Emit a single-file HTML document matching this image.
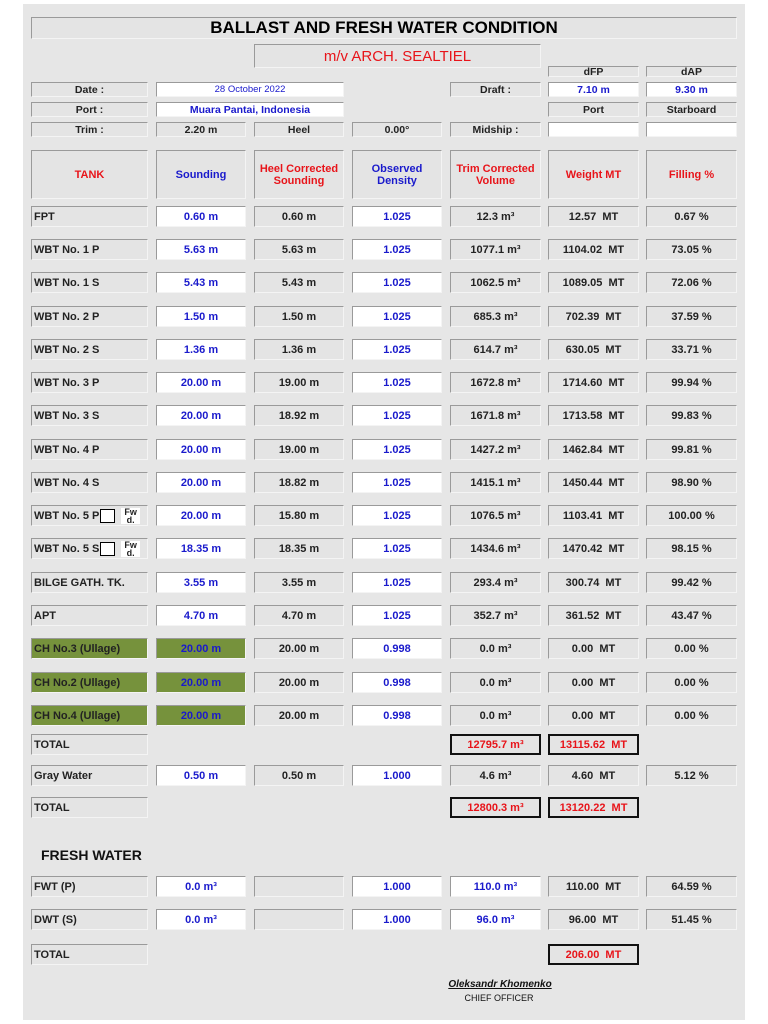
<!DOCTYPE html>
<html><head><meta charset="utf-8"><style>
body{margin:0;width:768px;height:1024px;background:#fff;position:relative;overflow:hidden;font-family:"Liberation Sans",Arial,sans-serif;font-weight:bold;font-size:11px;color:#222}
#p{position:absolute;left:23px;top:4px;width:722px;height:1016px;background:#e6e6e6}
.c{position:absolute;box-sizing:border-box;background:#e4e4e4;border-top:1px solid #9a9a9a;border-left:1px solid #9a9a9a;border-bottom:1px solid #f4f4f4;border-right:1px solid #f4f4f4;display:flex;align-items:center;justify-content:center;text-align:center;height:21px;white-space:nowrap}
.w{background:#fff}
.b{color:#1a1acc}
.r{color:#e8141a}
.g{background:#76923c}
.l{justify-content:flex-start;padding-left:2px}
.t{border:2px solid #111;color:#e8141a}
.c1{left:31px;width:117px}.c2{left:156px;width:90px}.c3{left:254px;width:90px}.c4{left:352px;width:90px}.c5{left:450px;width:91px}.c6{left:548px;width:91px}.c7{left:646px;width:91px}
.h{top:150px;height:49px;line-height:12px}
.s{height:15px;font-size:10.5px}
</style></head><body>
<div id="p"></div>
<div class="c" style="left:31px;width:706px;top:17px;height:22px;font-size:17px;color:#000">BALLAST AND FRESH WATER CONDITION</div>
<div class="c r" style="left:254px;width:287px;top:44px;height:24px;font-size:15px;font-weight:normal">m/v ARCH. SEALTIEL</div>
<div class="c s c6" style="top:66px;height:11px">dFP</div><div class="c s c7" style="top:66px;height:11px">dAP</div>
<div class="c s c1" style="top:82px">Date :</div>
<div class="c s w b c2" style="top:82px;width:188px;font-weight:normal;font-size:9.5px">28 October 2022</div>
<div class="c s c5" style="top:82px">Draft :</div>
<div class="c s w b c6" style="top:82px">7.10 m</div><div class="c s w b c7" style="top:82px">9.30 m</div>
<div class="c s c1" style="top:102px">Port :</div>
<div class="c s w b c2" style="top:102px;width:188px">Muara Pantai, Indonesia</div>
<div class="c s c6" style="top:102px">Port</div><div class="c s c7" style="top:102px">Starboard</div>
<div class="c s c1" style="top:122px">Trim :</div><div class="c s c2" style="top:122px">2.20 m</div><div class="c s c3" style="top:122px">Heel</div><div class="c s c4" style="top:122px">0.00°</div><div class="c s c5" style="top:122px">Midship :</div><div class="c s w c6" style="top:122px"></div><div class="c s w c7" style="top:122px"></div>
<div class="c h r c1">TANK</div><div class="c h b c2">Sounding</div><div class="c h r c3">Heel Corrected<br>Sounding</div><div class="c h b c4">Observed<br>Density</div><div class="c h r c5">Trim Corrected<br>Volume</div><div class="c h r c6">Weight MT</div><div class="c h r c7">Filling %</div>

<div style="position:absolute;top:206px;left:0;width:768px">
<div class="c l c1" style="top:0">FPT</div><div class="c w b c2" style="top:0">0.60 m</div><div class="c c3" style="top:0">0.60 m</div><div class="c w b c4" style="top:0">1.025</div><div class="c c5" style="top:0">12.3 m³</div><div class="c c6" style="top:0">12.57&nbsp; MT</div><div class="c c7" style="top:0">0.67 %</div>
<div class="c l c1" style="top:33px">WBT No. 1 P</div><div class="c w b c2" style="top:33px">5.63 m</div><div class="c c3" style="top:33px">5.63 m</div><div class="c w b c4" style="top:33px">1.025</div><div class="c c5" style="top:33px">1077.1 m³</div><div class="c c6" style="top:33px">1104.02&nbsp; MT</div><div class="c c7" style="top:33px">73.05 %</div>
<div class="c l c1" style="top:66px">WBT No. 1 S</div><div class="c w b c2" style="top:66px">5.43 m</div><div class="c c3" style="top:66px">5.43 m</div><div class="c w b c4" style="top:66px">1.025</div><div class="c c5" style="top:66px">1062.5 m³</div><div class="c c6" style="top:66px">1089.05&nbsp; MT</div><div class="c c7" style="top:66px">72.06 %</div>
<div class="c l c1" style="top:100px">WBT No. 2 P</div><div class="c w b c2" style="top:100px">1.50 m</div><div class="c c3" style="top:100px">1.50 m</div><div class="c w b c4" style="top:100px">1.025</div><div class="c c5" style="top:100px">685.3 m³</div><div class="c c6" style="top:100px">702.39&nbsp; MT</div><div class="c c7" style="top:100px">37.59 %</div>
<div class="c l c1" style="top:133px">WBT No. 2 S</div><div class="c w b c2" style="top:133px">1.36 m</div><div class="c c3" style="top:133px">1.36 m</div><div class="c w b c4" style="top:133px">1.025</div><div class="c c5" style="top:133px">614.7 m³</div><div class="c c6" style="top:133px">630.05&nbsp; MT</div><div class="c c7" style="top:133px">33.71 %</div>
<div class="c l c1" style="top:166px">WBT No. 3 P</div><div class="c w b c2" style="top:166px">20.00 m</div><div class="c c3" style="top:166px">19.00 m</div><div class="c w b c4" style="top:166px">1.025</div><div class="c c5" style="top:166px">1672.8 m³</div><div class="c c6" style="top:166px">1714.60&nbsp; MT</div><div class="c c7" style="top:166px">99.94 %</div>
<div class="c l c1" style="top:199px">WBT No. 3 S</div><div class="c w b c2" style="top:199px">20.00 m</div><div class="c c3" style="top:199px">18.92 m</div><div class="c w b c4" style="top:199px">1.025</div><div class="c c5" style="top:199px">1671.8 m³</div><div class="c c6" style="top:199px">1713.58&nbsp; MT</div><div class="c c7" style="top:199px">99.83 %</div>
<div class="c l c1" style="top:233px">WBT No. 4 P</div><div class="c w b c2" style="top:233px">20.00 m</div><div class="c c3" style="top:233px">19.00 m</div><div class="c w b c4" style="top:233px">1.025</div><div class="c c5" style="top:233px">1427.2 m³</div><div class="c c6" style="top:233px">1462.84&nbsp; MT</div><div class="c c7" style="top:233px">99.81 %</div>
<div class="c l c1" style="top:266px">WBT No. 4 S</div><div class="c w b c2" style="top:266px">20.00 m</div><div class="c c3" style="top:266px">18.82 m</div><div class="c w b c4" style="top:266px">1.025</div><div class="c c5" style="top:266px">1415.1 m³</div><div class="c c6" style="top:266px">1450.44&nbsp; MT</div><div class="c c7" style="top:266px">98.90 %</div>
<div class="c l c1" style="top:299px">WBT No. 5 P<span style="display:inline-block;width:13px;height:12px;border:1.5px solid #000;background:#fff;margin-left:1px"></span><span style="font-size:9px;line-height:8px;margin-left:6px;background:#fff;padding:0 3px">Fw<br>d.</span></div><div class="c w b c2" style="top:299px">20.00 m</div><div class="c c3" style="top:299px">15.80 m</div><div class="c w b c4" style="top:299px">1.025</div><div class="c c5" style="top:299px">1076.5 m³</div><div class="c c6" style="top:299px">1103.41&nbsp; MT</div><div class="c c7" style="top:299px">100.00 %</div>
<div class="c l c1" style="top:332px">WBT No. 5 S<span style="display:inline-block;width:13px;height:12px;border:1.5px solid #000;background:#fff;margin-left:1px"></span><span style="font-size:9px;line-height:8px;margin-left:6px;background:#fff;padding:0 3px">Fw<br>d.</span></div><div class="c w b c2" style="top:332px">18.35 m</div><div class="c c3" style="top:332px">18.35 m</div><div class="c w b c4" style="top:332px">1.025</div><div class="c c5" style="top:332px">1434.6 m³</div><div class="c c6" style="top:332px">1470.42&nbsp; MT</div><div class="c c7" style="top:332px">98.15 %</div>
<div class="c l c1" style="top:366px">BILGE GATH. TK.</div><div class="c w b c2" style="top:366px">3.55 m</div><div class="c c3" style="top:366px">3.55 m</div><div class="c w b c4" style="top:366px">1.025</div><div class="c c5" style="top:366px">293.4 m³</div><div class="c c6" style="top:366px">300.74&nbsp; MT</div><div class="c c7" style="top:366px">99.42 %</div>
<div class="c l c1" style="top:399px">APT</div><div class="c w b c2" style="top:399px">4.70 m</div><div class="c c3" style="top:399px">4.70 m</div><div class="c w b c4" style="top:399px">1.025</div><div class="c c5" style="top:399px">352.7 m³</div><div class="c c6" style="top:399px">361.52&nbsp; MT</div><div class="c c7" style="top:399px">43.47 %</div>
<div class="c l g c1" style="top:432px">CH No.3 (Ullage)</div><div class="c g b c2" style="top:432px">20.00 m</div><div class="c c3" style="top:432px">20.00 m</div><div class="c w b c4" style="top:432px">0.998</div><div class="c c5" style="top:432px">0.0 m³</div><div class="c c6" style="top:432px">0.00&nbsp; MT</div><div class="c c7" style="top:432px">0.00 %</div>
<div class="c l g c1" style="top:466px">CH No.2 (Ullage)</div><div class="c g b c2" style="top:466px">20.00 m</div><div class="c c3" style="top:466px">20.00 m</div><div class="c w b c4" style="top:466px">0.998</div><div class="c c5" style="top:466px">0.0 m³</div><div class="c c6" style="top:466px">0.00&nbsp; MT</div><div class="c c7" style="top:466px">0.00 %</div>
<div class="c l g c1" style="top:499px">CH No.4 (Ullage)</div><div class="c g b c2" style="top:499px">20.00 m</div><div class="c c3" style="top:499px">20.00 m</div><div class="c w b c4" style="top:499px">0.998</div><div class="c c5" style="top:499px">0.0 m³</div><div class="c c6" style="top:499px">0.00&nbsp; MT</div><div class="c c7" style="top:499px">0.00 %</div>
<div class="c l c1" style="top:528px">TOTAL</div><div class="c t c5" style="top:528px">12795.7 m³</div><div class="c t c6" style="top:528px">13115.62&nbsp; MT</div>
<div class="c l c1" style="top:559px">Gray Water</div><div class="c w b c2" style="top:559px">0.50 m</div><div class="c c3" style="top:559px">0.50 m</div><div class="c w b c4" style="top:559px">1.000</div><div class="c c5" style="top:559px">4.6 m³</div><div class="c c6" style="top:559px">4.60&nbsp; MT</div><div class="c c7" style="top:559px">5.12 %</div>
<div class="c l c1" style="top:591px">TOTAL</div><div class="c t c5" style="top:591px">12800.3 m³</div><div class="c t c6" style="top:591px">13120.22&nbsp; MT</div>
<div style="position:absolute;left:41px;top:641px;font-size:14px;font-weight:bold;color:#111">FRESH WATER</div>
<div class="c l c1" style="top:670px">FWT (P)</div><div class="c w b c2" style="top:670px">0.0 m³</div><div class="c c3" style="top:670px"></div><div class="c w b c4" style="top:670px">1.000</div><div class="c w b c5" style="top:670px">110.0 m³</div><div class="c c6" style="top:670px">110.00&nbsp; MT</div><div class="c c7" style="top:670px">64.59 %</div>
<div class="c l c1" style="top:703px">DWT (S)</div><div class="c w b c2" style="top:703px">0.0 m³</div><div class="c c3" style="top:703px"></div><div class="c w b c4" style="top:703px">1.000</div><div class="c w b c5" style="top:703px">96.0 m³</div><div class="c c6" style="top:703px">96.00&nbsp; MT</div><div class="c c7" style="top:703px">51.45 %</div>
<div class="c l c1" style="top:738px">TOTAL</div><div class="c t c6" style="top:738px">206.00&nbsp; MT</div>
</div>
<div style="position:absolute;left:420px;width:160px;top:979px;text-align:center;font-size:10px;font-style:italic;text-decoration:underline;color:#111">Oleksandr Khomenko</div>
<div style="position:absolute;left:420px;width:158px;top:993px;text-align:center;font-size:9px;font-weight:normal;color:#111">CHIEF OFFICER</div>
</body></html>
